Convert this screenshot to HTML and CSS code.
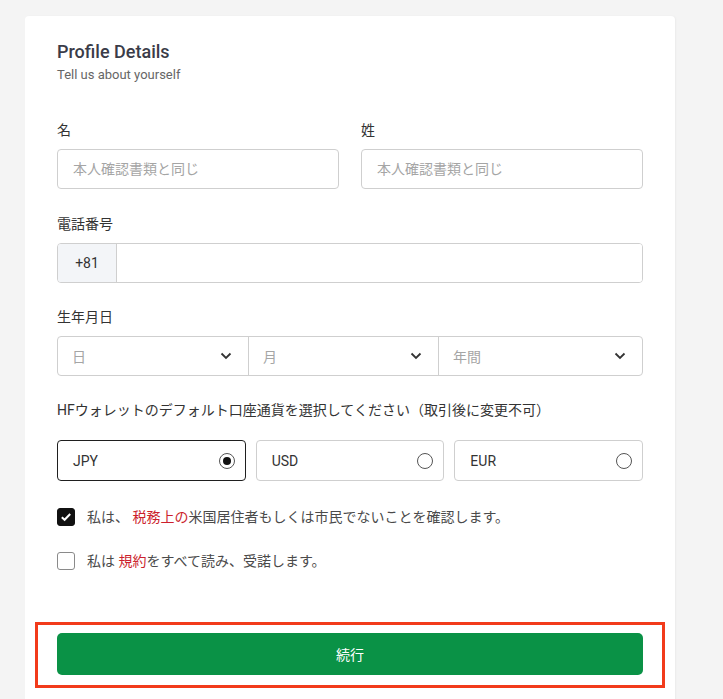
FILE: index.html
```html
<!DOCTYPE html>
<html lang="ja">
<head>
    <meta charset="UTF-8">
    <meta name="viewport" content="width=device-width, initial-scale=1.0">
    <title>Profile Details</title>
    <link rel="stylesheet" href="styles.css">
</head>
<body>
    <main class="card">
        <header class="card-head">
            <h1>Profile Details</h1>
            <p>Tell us about yourself</p>
        </header>

        <section class="row name-row">
            <div class="field">
                <label>名</label>
                <input type="text" class="text-input" placeholder="本人確認書類と同じ">
            </div>
            <div class="field">
                <label>姓</label>
                <input type="text" class="text-input" placeholder="本人確認書類と同じ">
            </div>
        </section>

        <section class="field phone-field">
            <label>電話番号</label>
            <div class="phone">
                <span class="prefix">+81</span>
                <input type="tel" class="phone-input">
            </div>
        </section>

        <section class="field birth-field">
            <label>生年月日</label>
            <div class="selects">
                <div class="select-cell">
                    <span>日</span>
                    <svg width="12" height="8" viewBox="0 0 12 8"><path d="M1.5 1.5 L6 6 L10.5 1.5" fill="none" stroke="#333" stroke-width="1.8"/></svg>
                </div>
                <div class="select-cell">
                    <span>月</span>
                    <svg width="12" height="8" viewBox="0 0 12 8"><path d="M1.5 1.5 L6 6 L10.5 1.5" fill="none" stroke="#333" stroke-width="1.8"/></svg>
                </div>
                <div class="select-cell">
                    <span>年間</span>
                    <svg width="12" height="8" viewBox="0 0 12 8"><path d="M1.5 1.5 L6 6 L10.5 1.5" fill="none" stroke="#333" stroke-width="1.8"/></svg>
                </div>
            </div>
        </section>

        <section class="field currency-field">
            <label>HFウォレットのデフォルト口座通貨を選択してください（取引後に変更不可）</label>
            <div class="currencies">
                <div class="currency selected"><span>JPY</span><i class="radio"></i></div>
                <div class="currency"><span>USD</span><i class="radio"></i></div>
                <div class="currency"><span>EUR</span><i class="radio"></i></div>
            </div>
        </section>

        <div class="check checked">
            <span class="box">
                <svg width="12" height="10" viewBox="0 0 12 10"><path d="M1.8 5.2 L4.6 7.8 L10.2 2" fill="none" stroke="#fff" stroke-width="2"/></svg>
            </span>
            <p>私は、 <a href="#">税務上の</a>米国居住者もしくは市民でないことを確認します。</p>
        </div>
        <div class="check">
            <span class="box"></span>
            <p>私は <a href="#">規約</a>をすべて読み、受諾します。</p>
        </div>

        <div class="highlight">
            <button class="continue">続行</button>
        </div>
    </main>
</body>
</html>
```

FILE: styles.css
```css
* {
    margin: 0;
    padding: 0;
    box-sizing: border-box;
}

body {
    background: #f4f4f4;
    font-family: 'Roboto', 'Noto Sans CJK JP', sans-serif;
    color: #333;
    padding: 16px 0 0 25px;
}

.card {
    width: 650px;
    background: #fff;
    border-radius: 4px 4px 0 0;
    box-shadow: 1px 0 2px rgba(0, 0, 0, 0.04);
    padding: 24px 32px 40px;
}

.card-head h1 {
    font-size: 18px;
    line-height: 24px;
    font-weight: 500;
    color: #3a3c48;
}

.card-head p {
    margin-top: 3px;
    font-size: 13px;
    line-height: 16px;
    color: #666;
}

.field label {
    display: block;
    font-size: 14px;
    line-height: 20px;
    color: #333;
    margin-bottom: 9px;
}

.name-row {
    display: flex;
    gap: 22px;
    margin-top: 37px;
}

.name-row .field {
    flex: 1;
}

.text-input,
.phone-input {
    display: block;
    width: 100%;
    height: 40px;
    border: 1px solid #cfcfcf;
    border-radius: 4px;
    padding: 0 15px;
    font-family: inherit;
    font-size: 14px;
    color: #333;
    outline: none;
}

.text-input::placeholder {
    color: #a5a5a5;
}

.phone-field {
    margin-top: 25px;
}

.phone {
    display: flex;
    height: 40px;
    border: 1px solid #cfcfcf;
    border-radius: 4px;
    overflow: hidden;
}

.prefix {
    width: 59px;
    background: #f3f5f8;
    border-right: 1px solid #cfcfcf;
    display: flex;
    align-items: center;
    justify-content: center;
    font-size: 14px;
    color: #333;
}

.phone .phone-input {
    flex: 1;
    height: 38px;
    border: none;
    border-radius: 0;
}

.birth-field {
    margin-top: 24px;
}

.selects {
    display: flex;
    height: 40px;
    border: 1px solid #cfcfcf;
    border-radius: 4px;
}

.select-cell {
    width: 190px;
    display: flex;
    align-items: center;
    justify-content: space-between;
    padding: 0 16px 0 14px;
    font-size: 14px;
    color: #a5a5a5;
}

.select-cell:last-child {
    flex: 1;
}

.select-cell + .select-cell {
    border-left: 1px solid #cfcfcf;
}

.currency-field {
    margin-top: 24px;
}

.currency-field label {
    margin-bottom: 20px;
}

.currencies {
    display: flex;
    gap: 10px;
}

.currency {
    flex: 1;
    height: 41px;
    border: 1px solid #cfcfcf;
    border-radius: 4px;
    display: flex;
    align-items: center;
    justify-content: space-between;
    padding: 0 10px 0 15px;
    font-size: 14px;
    color: #333;
}

.currency.selected {
    border-color: #1f1f1f;
}

.radio {
    width: 16px;
    height: 16px;
    border: 1px solid #555;
    border-radius: 50%;
    display: flex;
    align-items: center;
    justify-content: center;
}

.currency.selected .radio::after {
    content: "";
    width: 8px;
    height: 8px;
    border-radius: 50%;
    background: #111;
}

.check {
    display: flex;
    align-items: center;
    gap: 12px;
    margin-top: 24px;
}

.currency-field + .check {
    margin-top: 26px;
}

.box {
    width: 18px;
    height: 18px;
    border: 1px solid #8a8a8a;
    border-radius: 3px;
    display: flex;
    align-items: center;
    justify-content: center;
}

.check.checked .box {
    background: #111;
    border-color: #111;
}

.check p {
    font-size: 14px;
    line-height: 20px;
    color: #4a4a4a;
}

.check a {
    color: #cc1f2d;
    text-decoration: none;
}

.highlight {
    margin: 51px -22px 0;
    border: 3px solid #f23b1b;
    padding: 8px 19px 10px;
}

.continue {
    display: block;
    width: 100%;
    height: 42px;
    border: none;
    border-radius: 5px;
    background: #0a9246;
    color: #fff;
    font-family: inherit;
    font-size: 14px;
    cursor: pointer;
}
```
